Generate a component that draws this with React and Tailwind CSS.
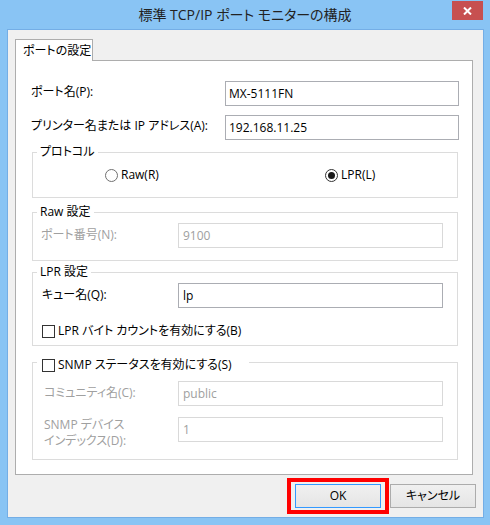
import React from 'react';

const TextBox = ({ value, disabled, className = '' }) => (
  <div
    className={`flex items-center h-[25px] border bg-white pl-[3px] leading-[16px] ${
      disabled ? 'border-[#d9d9d9] text-[#a0a0a0]' : 'border-[#abadb3] text-black'
    } ${className}`}
  >
    {value}
  </div>
);

const Radio = ({ label, checked, className = '' }) => (
  <div className={`flex items-center h-[16px] ${className}`}>
    <span
      className={`flex items-center justify-center w-[13px] h-[13px] rounded-full border bg-white ${
        checked ? 'border-[#333333]' : 'border-[#707070]'
      }`}
    >
      {checked && <span className="w-[7px] h-[7px] rounded-full bg-[#1a1a1a]" />}
    </span>
    <span className="ml-[3px]">{label}</span>
  </div>
);

const Checkbox = ({ label, className = '' }) => (
  <div className={`flex items-center h-[16px] ${className}`}>
    <span className="w-[13px] h-[13px] border border-[#333333] bg-white" />
    <span className="ml-[3px]">{label}</span>
  </div>
);

export default function App() {
  return (
    <div className="w-[490px] h-[525px] bg-[#89c4f4] flex flex-col overflow-hidden text-[12px] text-black font-['Open_Sans','Noto_Sans_CJK_JP',sans-serif] [font-feature-settings:'palt']">
      {/* Title bar */}
      <div className="h-[29px] grid grid-cols-[1fr_auto_1fr] items-start">
        <div />
        <div className="pt-[5px] text-[14px] leading-[20px] text-[#222222]">標準 TCP/IP ポート モニターの構成</div>
        <div className="flex justify-end pr-[7px] pt-[1px]">
          <div className="w-[31px] h-[19px] bg-[#c75050] flex items-center justify-center">
            <svg width="9" height="8" viewBox="0 0 9 8">
              <path d="M1 0.5 L8 7.5 M8 0.5 L1 7.5" stroke="#ffffff" strokeWidth="2" />
            </svg>
          </div>
        </div>
      </div>

      {/* Client area */}
      <div className="w-[477px] h-[489px] ml-[7px] bg-[#f0f0f0] border border-[#74aee6] flex flex-col">
        {/* Tab */}
        <div className="flex ml-[7px] mt-[9px]">
          <div className="relative z-10 -mb-px w-[78px] h-[22px] border border-b-0 border-[#adadad] bg-white flex items-center pl-[7px] leading-[16px]">
            ポートの設定
          </div>
        </div>

        {/* Tab panel */}
        <div className="ml-[7px] w-[458px] h-[415px] border border-[#adadad] bg-white flex flex-col pl-[16px] pr-[14px]">
          <div className="flex items-center mt-[20px]">
            <span className="flex-1 mb-[3px] -ml-px">ポート名(P):</span>
            <TextBox value="MX-5111FN" className="w-[234px] h-[24px] -mr-px" />
          </div>
          <div className="flex items-center mt-[9px]">
            <span className="flex-1 mb-[3px] -ml-px">プリンター名または IP アドレス(A):</span>
            <TextBox value="192.168.11.25" className="w-[234px] -mr-px" />
          </div>

          {/* Protocol */}
          <fieldset className="mt-[4px] h-[54px] border border-[#dcdcdc]">
            <legend className="ml-[4px] px-[3px] leading-[16px]">プロトコル</legend>
            <div className="flex mt-[7px]">
              <Radio label="Raw(R)" className="ml-[72px] w-[220px]" />
              <Radio label="LPR(L)" checked />
            </div>
          </fieldset>

          {/* Raw settings */}
          <fieldset className="mt-[6px] h-[57px] border border-[#dcdcdc]">
            <legend className="ml-[4px] px-[3px] leading-[16px]">Raw 設定</legend>
            <div className="flex items-center mt-[3px] pl-[8px]">
              <span className="flex-1 mb-[2px] text-[#a0a0a0]">ポート番号(N):</span>
              <TextBox value="9100" disabled className="w-[265px] mr-[14px] pl-[4px]" />
            </div>
          </fieldset>

          {/* LPR settings */}
          <fieldset className="mt-[3px] h-[82px] border border-[#dcdcdc]">
            <legend className="ml-[4px] px-[3px] leading-[16px]">LPR 設定</legend>
            <div className="flex items-center mt-[3px] pl-[9px]">
              <span className="flex-1 mb-[2px]">キュー名(Q):</span>
              <TextBox value="lp" className="w-[265px] mr-[14px] pl-[4px]" />
            </div>
            <Checkbox label="LPR バイト カウントを有効にする(B)" className="mt-[15px] ml-[9px]" />
          </fieldset>

          {/* SNMP */}
          <fieldset className="mt-[5px] h-[109px] border border-[#dcdcdc]">
            <legend className="ml-[4px] pl-[5px] pr-[17px] pt-[6px]">
              <Checkbox label="SNMP ステータスを有効にする(S)" />
            </legend>
            <div className="flex items-center mt-[8px] pl-[11px]">
              <span className="flex-1 mb-[2px] text-[#a0a0a0]">コミュニティ名(C):</span>
              <TextBox value="public" disabled className="w-[265px] mr-[14px] pl-[4px]" />
            </div>
            <div className="flex items-start mt-[11px] pl-[11px]">
              <div className="flex-1 flex flex-col leading-[16px] text-[#a0a0a0]">
                <span>SNMP デバイス</span>
                <span>インデックス(D):</span>
              </div>
              <TextBox value="1" disabled className="w-[265px] mr-[14px] pl-[4px]" />
            </div>
          </fieldset>
        </div>

        {/* Buttons */}
        <div className="flex justify-end items-center mt-[3px] pr-[7px]">
          <div className="border-4 border-[#ff0000] px-[4px] py-[2px]">
            <button className="w-[86px] h-[24px] border border-[#3399ff] bg-gradient-to-b from-[#f0f0f0] to-[#e5e5e5] flex items-center justify-center leading-[16px]">
              OK
            </button>
          </div>
          <button className="ml-[1px] w-[86px] h-[24px] border border-[#acacac] bg-gradient-to-b from-[#f0f0f0] to-[#e5e5e5] flex items-center justify-center leading-[16px]">
            キャンセル
          </button>
        </div>
      </div>
    </div>
  );
}
